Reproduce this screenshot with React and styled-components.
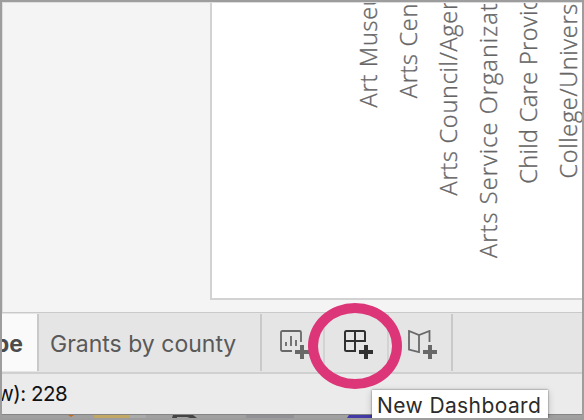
import React from 'react';
import styled, { createGlobalStyle } from 'styled-components';

const GlobalStyle = createGlobalStyle`
  *, *::before, *::after { box-sizing: border-box; }
  body { margin: 0; overflow: hidden; }
`;

const Frame = styled.div`
  position: relative;
  width: 584px;
  height: 420px;
  overflow: hidden;
  display: flex;
  flex-direction: column;
  border: 2px solid #9d9d9d;
  background: #f4f4f4;
  font-family: Inter, sans-serif;
`;

const Workspace = styled.main`
  height: 310px;
  display: flex;
  padding-left: 208px;
  border-top: 1px solid #dedede;
  border-left: 1px solid #dedede;
`;

const ChartPane = styled.section`
  flex: 1;
  height: 297px;
  display: flex;
  align-items: flex-end;
  padding-left: 136px;
  overflow: hidden;
  background: #fff;
  border-left: 2px solid #d2d2d2;
  border-bottom: 2px solid #d2d2d2;
  margin-left: -1px;
`;

const AxisLabel = styled.span`
  flex: none;
  width: 40px;
  margin-bottom: ${p => p.$gap}px;
  writing-mode: vertical-rl;
  transform: rotate(180deg);
  white-space: nowrap;
  font: 300 23.5px/40px 'Open Sans', sans-serif;
  letter-spacing: ${p => p.$spacing}px;
  color: #666;
  -webkit-text-stroke: 0.35px #666;
`;

const TabBar = styled.nav`
  flex: none;
  height: 62px;
  display: flex;
  padding-top: 1px;
  background: #e5e5e5;
  border-top: 1px solid #c9c9c9;
  border-bottom: 2px solid #d0d0d0;
`;

const Tab = styled.div`
  flex: none;
  width: ${p => p.$width}px;
  height: 57px;
  display: flex;
  align-items: center;
  justify-content: ${p => (p.$active ? 'flex-end' : 'flex-start')};
  padding: ${p => (p.$active ? '2px 14px 0 0' : '3px 0 0 11px')};
  overflow: hidden;
  white-space: nowrap;
  border-right: 2px solid #c9c9c9;
  background: ${p => (p.$active ? '#fafafa' : 'transparent')};
  color: ${p => (p.$active ? '#4c4c4c' : '#595959')};
  font-size: 23px;
  font-weight: ${p => (p.$active ? 700 : 400)};
`;

const IconButton = styled.button`
  flex: none;
  width: ${p => p.$width}px;
  height: 57px;
  padding: 16px 0 0 ${p => p.$inset}px;
  display: flex;
  align-items: flex-start;
  border: 0;
  border-right: 2px solid ${p => (p.$last ? '#c9c9c9' : '#d3d3d3')};
  background: transparent;
  color: ${p => (p.$hovered ? '#303030' : '#686868')};
`;

const StatusBar = styled.footer`
  flex: none;
  height: 40px;
  overflow: hidden;
  white-space: nowrap;
  background: #ebebeb;
  color: #111;
  font-size: 20.5px;
  line-height: 40px;
  letter-spacing: -0.5px;
`;

const StatusText = styled.span`
  display: inline-block;
  margin-left: -5px;
`;

const Dock = styled.div`
  flex: none;
  height: 4px;
  background: #a0a0a0;
  border-top: 1px solid #858585;
`;

const Ring = styled.div`
  position: absolute;
  left: 306px;
  top: 301px;
  width: 94px;
  height: 86px;
  border: 10px solid #dc3679;
  border-radius: 50%;
`;

const Tooltip = styled.div`
  position: absolute;
  left: 370px;
  top: 388px;
  width: 176px;
  height: 28px;
  padding-left: 5px;
  background: #fff;
  box-shadow: 0 0 2px rgba(0, 0, 0, 0.55), 0 2px 8px rgba(0, 0, 0, 0.18);
  color: #2b2b2b;
  font-size: 21px;
  letter-spacing: 0.4px;
  line-height: 32px;
  white-space: nowrap;
`;

const labels = [
  { text: 'Art Museum', gap: 191, spacing: 0.75 },
  { text: 'Arts Center', gap: 200, spacing: 0.7 },
  { text: 'Arts Council/Agency', gap: 103, spacing: 0.75 },
  { text: 'Arts Service Organization', gap: 40, spacing: 1.1 },
  { text: 'Child Care Provider', gap: 114, spacing: 0.4 },
  { text: 'College/University', gap: 120, spacing: 0.7 },
];

const Icon = ({ children }) => (
  <svg width="30" height="30" viewBox="0 0 30 30" fill="none" stroke="currentColor" strokeWidth="1.8">
    {children}
    <path d="M15 22h14M22 15v14" strokeWidth="4" />
  </svg>
);

const SheetIcon = () => (
  <Icon>
    <path d="M12 21H2.500Q1 21 1 19.500V2.500Q1 1 2.500 1H19.500Q21 1 21 2.500V12" />
    <path d="M6 12v4M11 6v10M16 10v6" />
  </Icon>
);

const DashboardIcon = () => (
  <Icon>
    <path d="M12 21H2.500Q1 21 1 19.500V2.500Q1 1 2.500 1H19.500Q21 1 21 2.500V12M1 11h21M11 1v20" strokeWidth="2" />
  </Icon>
);

const StoryIcon = () => (
  <Icon>
    <path d="M21.500 12V1L11 5L1 1V19.500L11 22V5" />
  </Icon>
);

const DockScraps = () => (
  <svg width="580" height="3" viewBox="0 0 580 3" style={{ display: 'block' }}>
    <path d="M66 0h6l-3 2z" fill="#c66b20" />
    <path d="M92 0h36v3H92z" fill="#c3a765" />
    <path d="M128 0h16v3h-16z" fill="#aaa" />
    <path d="M171 0h20l4 3h-7l-3-1h-10v1h-5z" fill="#444" />
    <path d="M244 0h48v3h-48z" fill="#929296" />
    <path d="M347 0h24v3h-26z" fill="#443aa5" />
  </svg>
);

export default function App() {
  return (
    <>
      <GlobalStyle />
      <Frame>
        <Workspace>
          <ChartPane>
            {labels.map(l => <AxisLabel key={l.text} $gap={l.gap} $spacing={l.spacing}>{l.text}</AxisLabel>)}
          </ChartPane>
        </Workspace>
        <TabBar>
          <Tab $width={37} $active>Type</Tab>
          <Tab $width={223}>Grants by county</Tab>
          <IconButton $width={63} $inset={18} aria-label="New Worksheet"><SheetIcon /></IconButton>
          <IconButton $width={64} $inset={19} $hovered aria-label="New Dashboard"><DashboardIcon /></IconButton>
          <IconButton $width={64} $inset={19} $last aria-label="New Story"><StoryIcon /></IconButton>
        </TabBar>
        <StatusBar><StatusText>w): 228</StatusText></StatusBar>
        <Dock><DockScraps /></Dock>
        <Ring />
        <Tooltip>New Dashboard</Tooltip>
      </Frame>
    </>
  );
}
